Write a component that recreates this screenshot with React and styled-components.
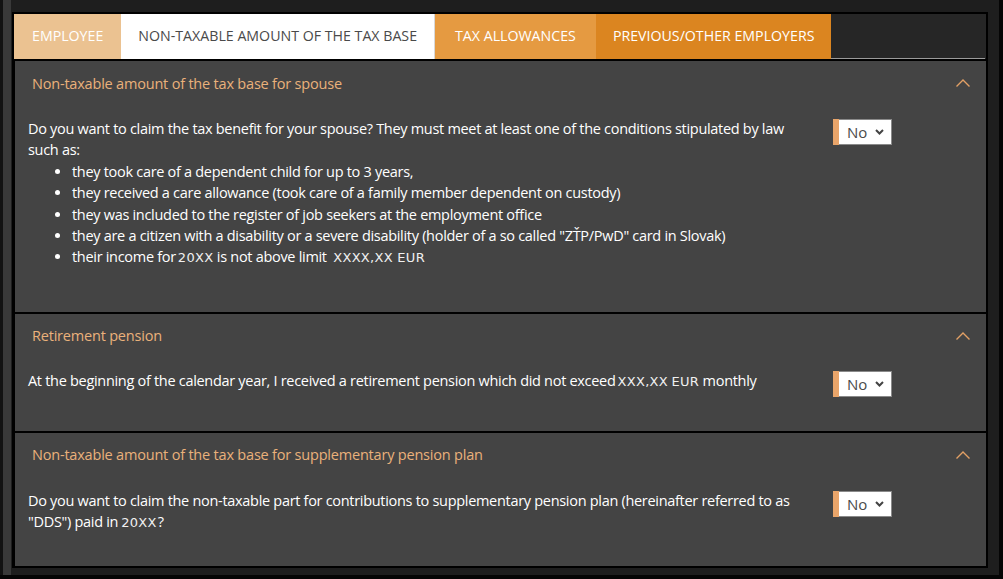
import React from "react";
import styled, { createGlobalStyle } from "styled-components";

const Global = createGlobalStyle`
  html, body { margin: 0; padding: 0; background: #1e1e1e; }
  body { font-family: "Open Sans", "Noto Sans", sans-serif; }
  * { box-sizing: border-box; }
`;

const Page = styled.div`
  width: 1003px;
  height: 579px;
  padding: 12px 0 0 12px;
  background:
    linear-gradient(to bottom, transparent 0 575px, #050505 575px),
    linear-gradient(to right, #121212 0 3px, #393939 3px 11px, #1e1e1e 11px 999px, #050505 999px);
  overflow: hidden;
`;

const Frame = styled.div`
  width: 976px;
  border: 2px solid #000;
  background: #000;
  display: flex;
  flex-direction: column;
  gap: 2px;
`;

const TabBar = styled.div`
  display: flex;
  height: 45px;
  background: #262626;
`;

const Tab = styled.div`
  display: flex;
  align-items: center;
  padding: 0 ${(p) => p.$pad || 18}px 3px;
  background: ${(p) => p.$bg};
  color: ${(p) => p.$fg || "#fff"};
  font-size: 14.2px;
  text-transform: uppercase;
  white-space: nowrap;
  border-right: ${(p) => (p.$sep ? "1px solid #d8d8d8" : "none")};
`;

const TabFill = styled.div`
  flex: 1;
  border-bottom: 1px solid #9a9a9a;
  margin-right: 1px;
`;

const Panel = styled.section`
  margin-left: 1px;
  background: #444444;
  color: #fff;
  padding-bottom: ${(p) => p.$pb}px;
`;

const Header = styled.div`
  height: 46px;
  display: flex;
  align-items: center;
  justify-content: space-between;
  padding: 0 15px 2px 17px;
  color: #eab17b;
  font-size: 14.5px;
  letter-spacing: -0.2px;
`;

const Body = styled.div`
  display: flex;
  align-items: flex-start;
  gap: 30px;
  padding: ${(p) => p.$pt}px 94px 0 13px;
`;

const Text = styled.div`
  flex: 1;
  font-size: 14.5px;
  line-height: 21.4px;
  letter-spacing: -0.3px;
`;

const List = styled.ul`
  margin: 0;
  padding-left: 44px;
`;

const Code = styled.span`
  font-family: "DejaVu Sans", sans-serif;
  font-size: 13px;
  letter-spacing: 0.3px;
  color: #f0f0f0;
  margin: 0 ${(p) => p.$mr || 0}px 0 ${(p) => p.$ml || 0}px;
`;

const Select = styled.div`
  display: flex;
  flex: none;
  height: 26px;
  margin-top: 1px;
`;

const SelectBar = styled.div`
  width: 6px;
  background: #e9a56a;
`;

const SelectBox = styled.div`
  width: 53px;
  display: flex;
  align-items: center;
  justify-content: space-between;
  padding: 0 7px 0 8px;
  background: #fff;
  border: 1px solid #8a8a8a;
  border-left: none;
  color: #4a4a4a;
  font-size: 15px;
`;

const Chevron = ({ up }) =>
  up ? (
    <svg width="16" height="10" viewBox="0 0 16 10">
      <polyline points="1.5,8.5 8,2 14.5,8.5" fill="none" stroke="#e3a065" strokeWidth="1.4" />
    </svg>
  ) : (
    <svg width="9" height="6" viewBox="0 0 9 6">
      <polyline points="1,1 4.5,4.5 8,1" fill="none" stroke="#444" strokeWidth="2" />
    </svg>
  );

const NoSelect = () => (
  <Select>
    <SelectBar />
    <SelectBox>
      <span>No</span>
      <Chevron />
    </SelectBox>
  </Select>
);

export default function App() {
  return (
    <Page>
      <Global />
      <Frame>
        <TabBar>
          <Tab $bg="#ebc291" $pad={18}>Employee</Tab>
          <Tab $bg="#ffffff" $fg="#4a4a4a" $pad={17} $sep>
            Non-taxable amount of the tax base
          </Tab>
          <Tab $bg="#e59a41" $pad={20}>Tax allowances</Tab>
          <Tab $bg="#db8520" $pad={17}>Previous/other employers</Tab>
          <TabFill />
        </TabBar>

        <Panel $pb={43}>
          <Header>
            <span>Non-taxable amount of the tax base for spouse</span>
            <Chevron up />
          </Header>
          <Body $pt={11}>
            <Text>
              Do you want to claim the tax benefit for your spouse? They must meet at least one of the
              conditions stipulated by law such as:
              <List>
                <li>they took care of a dependent child for up to 3 years,</li>
                <li>they received a care allowance (took care of a family member dependent on custody)</li>
                <li>they was included to the register of job seekers at the employment office</li>
                <li>
                  they are a citizen with a disability or a severe disability (holder of a so called
                  "ZŤP/PwD" card in Slovak)
                </li>
                <li>
                  their income for<Code $ml={2}>20XX</Code> is not above limit{" "}
                  <Code $ml={3}>XXXX,XX EUR</Code>
                </li>
              </List>
            </Text>
            <NoSelect />
          </Body>
        </Panel>

        <Panel $pb={34}>
          <Header>
            <span>Retirement pension</span>
            <Chevron up />
          </Header>
          <Body $pt={10}>
            <Text>
              At the beginning of the calendar year, I received a retirement pension which did not exceed
              <Code $ml={2}>XXX,XX</Code> <Code>EUR</Code> monthly
            </Text>
            <NoSelect />
          </Body>
        </Panel>

        <Panel $pb={32}>
          <Header>
            <span>Non-taxable amount of the tax base for supplementary pension plan</span>
            <Chevron up />
          </Header>
          <Body $pt={11}>
            <Text>
              Do you want to claim the non-taxable part for contributions to supplementary pension plan
              (hereinafter referred to as "DDS") paid in<Code $ml={3} $mr={1}>20XX</Code>?
            </Text>
            <NoSelect />
          </Body>
        </Panel>
      </Frame>
    </Page>
  );
}
